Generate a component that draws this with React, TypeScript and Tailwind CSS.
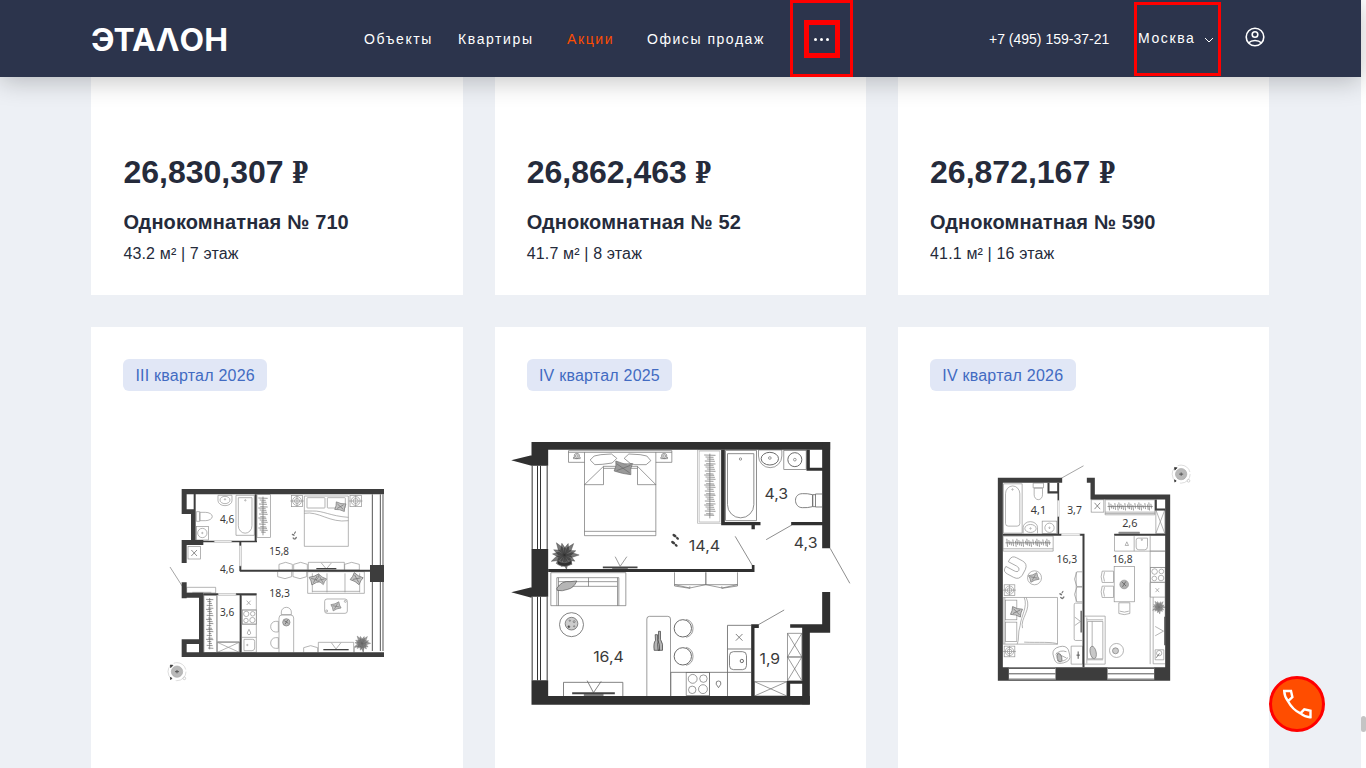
import React from "react";

const WALL = "#3d3d3d";
const WALL2 = "#303030";

type P = { x: number; y: number };

const Label = ({ x, y, w, children, size = 35, font = "Noto Sans" }: { x: number; y: number; w: number; children: string; size?: number; font?: string }) => (
  <text x={x} y={y} textLength={w} lengthAdjust="spacingAndGlyphs" fontSize={size} fontFamily={`"${font}", sans-serif`} fill="#3a3a3a" stroke="none">
    {children}
  </text>
);

const Cross = ({ x, y, w, h }: P & { w: number; h: number }) => (
  <path d={`M${x} ${y}h${w}v${h}h${-w}zl${w} ${h}M${x + w} ${y}l${-w} ${h}`} />
);

const Stove = ({ x, y, s }: P & { s: number }) => (
  <g>
    <rect x={x} y={y} width={s} height={s} />
    <circle cx={x + s * 0.28} cy={y + s * 0.28} r={s * 0.19} />
    <circle cx={x + s * 0.74} cy={y + s * 0.27} r={s * 0.16} />
    <circle cx={x + s * 0.26} cy={y + s * 0.75} r={s * 0.16} />
    <circle cx={x + s * 0.72} cy={y + s * 0.72} r={s * 0.19} />
  </g>
);

const Hangers = ({ x, y, len, size, vertical = false }: P & { len: number; size: number; vertical?: boolean }) => {
  const n = Math.floor(len / 6);
  const items = Array.from({ length: n }, (_, i) => {
    const a = ((i * 7) % 5) * 2;
    const b = ((i * 3) % 4) * 2;
    const t = i * 6 + (i % 5 === 4 ? 2 : 0);
    return vertical ? `M${x - size / 2 + a} ${y + t}L${x + size / 2 - b} ${y + t + 1}` : `M${x + t} ${y - size / 2 + a}L${x + t + 2} ${y + size / 2 - b}`;
  }).join("");
  return (
    <g stroke="#666" strokeWidth="2">
      <path d={vertical ? `M${x} ${y - 4}v${len + 4}` : `M${x - 4} ${y}h${len + 4}`} />
      <path d={items} />
    </g>
  );
};

const Plant = ({ x, y, r, color = "#555" }: P & { r: number; color?: string }) => (
  <g stroke={color} fill={color}>
    {Array.from({ length: 14 }, (_, i) => {
      const a = (i * 360) / 14 + (i % 2) * 5;
      const l = i % 3 === 0 ? r : r * 0.82;
      return <path key={i} strokeWidth="1" fillOpacity=".65" transform={`rotate(${a} ${x} ${y})`} d={`M${x} ${y}l${l * 0.5} ${-r * 0.17}l${l * 0.5} ${r * 0.17}l${-l * 0.5} ${r * 0.17}z`} />;
    })}
  </g>
);

const Lamp = ({ x, y, w = 34 }: P & { w?: number }) => (
  <g>
    <rect x={x - w / 2} y={y - w / 2} width={w} height={w} />
    <circle cx={x} cy={y} r={w * 0.39} />
    <circle cx={x} cy={y} r={w * 0.22} />
    <path d={`M${x - w * 0.6} ${y}h${w * 1.2}M${x} ${y - w * 0.5}v${w}`} />
  </g>
);

const Compass = ({ x, y }: P) => (
  <g>
    <circle cx={x} cy={y} r="27" stroke="#ccc" strokeDasharray="46 12" />
    <circle cx={x} cy={y} r="17" fill="#b9b9b9" stroke="#aaa" />
    <path d={`M${x - 6} ${y}h12M${x} ${y - 5}v10`} stroke="#555" strokeWidth="3" />
    <path d={`M${x - 20} ${y - 20}l8 1-7 7zM${x - 20} ${y + 17}l5 3-4 4z`} fill="#333" stroke="#333" />
    <circle cx={x + 22} cy={y + 20} r="4" fill="#fff" stroke="#bbb" />
  </g>
);

const Feet = ({ x, y }: P) => (
  <g fill="#777" stroke="none" transform={`translate(${x} ${y})`}>
    <ellipse cx="-1" cy="-1" rx="2.4" ry="5" transform="rotate(-60)" />
    <ellipse cx="4" cy="-6" rx="1.8" ry="4.5" transform="rotate(35 4 -6)" />
    <ellipse cx="0" cy="11" rx="2.2" ry="4" transform="rotate(-50 0 11)" />
    <ellipse cx="6" cy="11" rx="2.2" ry="5.5" transform="rotate(40 6 11)" />
  </g>
);

const Cushion = ({ x, y, r, s = 1 }: P & { r: number; s?: number }) => (
  <path transform={`translate(${x} ${y}) rotate(${r}) scale(${s})`} d="M-14-11Q0-7 14-11Q11 0 14 11Q0 7-14 11Q-11 0-14-11zM-10-6l20 12M-8 7L8-7" fill="#c4c4c4" stroke="#777" />
);

const PlanOne = () => (
  <g transform="translate(160 480) scale(.33333)" fill="none" stroke="#8f8f8f" strokeWidth="2">
    {/* furniture */}
    <path d="M174 46h42v16a21 15 0 0 1-42 0z" /><ellipse cx="195" cy="60" rx="15" ry="11" /><circle cx="195" cy="58" r="2" />
    <path d="M228 46h55v120h-55zM235 53h41v84a20 22 0 0 1-41 0z" /><circle cx="256" cy="61" r="2" />
    <path d="M109 95h10v29h-10zM120 97h16a20 12 0 0 1 0 25h-16z" />
    <rect x="110" y="139" width="35" height="41" /><circle cx="127" cy="159" r="14" /><circle cx="127" cy="159" r="2" />
    <rect x="291" y="44" width="40" height="129" /><Hangers x={309} y={54} len={112} size={28} vertical />
    <path d="M433 48h132v151h-132zM433 93h25C490 92 510 108 565 112M433 100C475 92 510 130 565 122" />
    <rect x="441" y="53" width="54" height="31" rx="2" /><rect x="502" y="53" width="54" height="31" rx="2" /><Cushion x={541} y={80} r={12} s={1.05} />
    <Lamp x={411} y={63} /><Lamp x={587} y={63} />
    <Feet x={401} y={164} />
    <rect x="84" y="200" width="38" height="37" /><path d="M94 210l17 18m0-18l-17 18" stroke="#555" />
    <path d="M80 322h87v17H80zM97 337h57" />
    <path d="M357 253l20-6 20 6v17h-40zM401 253l21-6 20 6v17h-41zM554 253l21-6 23 6v17h-44zM445 247h108v23H445z" />
    <path d="M353 275v15l22 6 20-6v-15M399 275v15l21 6 20-6v-15M484 249l15 18 15-18" /><path d="M469 266h60" stroke="#444" strokeWidth="4" />
    <path d="M443 275h170v65H443zM457 280v57M599 280v57M501 280v57M555 280v57M457 334h142" />
    <Cushion x={466} y={298} r={-20} s={1.1} /><Cushion x={484} y={299} r={30} s={0.9} /><Cushion x={590} y={296} r={30} s={1.1} />
    <rect x="494" y="357" width="68" height="43" rx="7" /><Cushion x={528} y={379} r={-20} s={0.9} />
    <circle cx="500" cy="393" r="3" /><circle cx="556" cy="364" r="3" />
    <rect x="132" y="347" width="38" height="170" /><Hangers x={149} y={358} len={150} size={22} vertical />
    <path d="M172 347v139h66M172 486h66v31h-66z" /><Cross x={172} y={487} w={66} h={30} />
    <path d="M246 346h43v171h-43M246 390h43M246 433h43M246 472h43M260 362l12 13m0-13l-12 13" /><Stove x={247} y={390} s={42} />
    <path d="M267 448l4 8a5 5 0 1 1-8 0z" /><path d="M252 478h26a6 6 0 0 1 6 6v20a8 8 0 0 1-8 8h-24z" /><circle cx="262" cy="495" r="2" />
    <path d="M357 517V414q0-9 9-9h26q9 0 9 9v103M364 404v-8a15 14 0 0 1 30 0v8zM355 424h-8a15 16 0 0 0 0 32h8zM355 473h-8a15 16 0 0 0 0 32h8z" />
    <circle cx="379" cy="427" r="11" fill="#bbb" stroke="#777" /><path d="M373 422l12 8m-10 3l8-13" stroke="#555" />
    <path d="M431 517v-14l21-6 21 6v14M475 517v-30h106v30M583 517v-14l15-5 12 5v14M514 488l14 19 15-19" /><path d="M490 509h76" stroke="#444" strokeWidth="4" />
    <Plant x={606} y={490} r={26} color="#666" />
    <path d="M30 261l39 61" stroke="#777" />
    {/* windows */}
    <path d="M637 43v470M661 43v470M669 43v470" stroke="#555" strokeWidth="3" />
    {/* walls */}
    <g fill={WALL} stroke="none">
      <path d="M65 27h607v16H65zM65 27h15v75H65zM65 88h42v14H65zM93 88h14v105H93zM65 180h65v15H65zM65 180h15v69H65zM101 43h6v50h-6z" />
      <path d="M630 255h42v51h-42zM65 517h607v14H65zM65 307h15v48H65zM65 338h65v15H65zM117 342h14v176h-14zM65 478h66v14H65zM65 478h15v53H65z" />
      <path d="M284 43h6v144h-6zM107 182h56v5h-56zM215 182h76v5h-76zM238 187h6v10h-6zM238 258h6v16h-6zM240 269h390v6H240zM130 340h45v6h-45zM228 340h62v6h-62zM239 346h6v172h-6z" />
    </g>
    <path d="M163 182h52v5h-52zM239 197v61h5v-61M175 341h53v5h-53z" stroke="#aaa" />
    <Label x={180} y={128} w={43}>4,6</Label><Label x={328} y={225} w={59}>15,8</Label><Label x={180} y={278} w={43}>4,6</Label>
    <Label x={328} y={350} w={62}>18,3</Label><Label x={180} y={408} w={43}>3,6</Label>
    <Compass x={51} y={575} />
  </g>
);

const PlanTwo = () => (
  <g transform="translate(505 435) scale(.33333)" fill="none" stroke="#6a6a6a" strokeWidth="2">
    <path d="M190 47h310v35h-48M190 47v35h48M190 52h310M238 52v250h214V52M238 289h214M238 149l57-55v55zM452 149l-55-55v55zM295 94h102M295 100h102" />
    <path d="M255 75l12-12 20-4 32-2 16 13-14 14-30 4-22 1zM357 70l14-13 34 2 20 4 12 14-14 12-34 0-14-4z" />
    <path d="M332 78Q356 91 382 86Q374 101 377 119Q353 117 327 108Q335 93 332 78zM334 86l40 28M334 107l42-16" fill="#999" stroke="#666" />
    {[215, 477].map((x) => <g key={x}><circle cx={x} cy="63" r="8" /><circle cx={x} cy="63" r="4" /><path d={`M${x - 10} 66v5h20v-5`} /></g>)}
    <Plant x={178} y={360} r={44} color="#303030" />
    <path d="M157 376q20 14 42 0v12q-22 12-42 0z" fill="#303030" />
    <path d="M330 365l15 29 20-29" /><path d="M293 397h104" stroke="#444" strokeWidth="5" /><path d="M321 402h47" stroke="#444" strokeWidth="4" />
    <g fill="#3f3f3f" stroke="none">
      {[[508, 302], [504, 323]].map(([x, y]) => (
        <g key={y}><ellipse cx={x} cy={y} rx="4" ry="7" transform={`rotate(-55 ${x} ${y})`} /><ellipse cx={x + 9} cy={y + 8} rx="3.5" ry="5" transform={`rotate(-50 ${x + 9} ${y + 8})`} /></g>
      ))}
    </g>
    {/* wardrobe */}
    <path d="M577 45h72v220h-72zM582 48h62v213h-62z" stroke="#aaa" /><Hangers x={614} y={60} len={190} size={34} vertical />
    {/* bathroom */}
    <path d="M661 46h93v211h-93zM667 56h79v153a39 39 0 0 1-79 0z" stroke="#777" strokeWidth="2.5" /><circle cx="706" cy="72" r="3.5" />
    <path d="M760 45h70v18a35 35 0 0 1-70 0z" /><ellipse cx="794" cy="71" rx="26" ry="19" strokeWidth="3" /><circle cx="794" cy="69" r="4" />
    <rect x="836" y="46" width="67" height="57" /><circle cx="869" cy="74" r="21" strokeWidth="3" /><circle cx="869" cy="74" r="4" />
    <path d="M951 177h-20v39h20M931 179h-8v36h8M922 179q-16-4-30-3c-14 0-21 9-21 20s7 22 21 22q14 1 30-3z" strokeWidth="2.5" />
    {/* living room */}
    <path d="M137 413h225v99H137zM155 512v-84h186v84M160 440h176M160 454h176M250 428v26M160 428v84M337 428v84" />
    <path d="M155 460Q170 436 195 440L215 438Q206 459 188 463Q170 470 156 466z" fill="#b5b5b5" stroke="#555" />
    <circle cx="199" cy="569" r="36" strokeWidth="2.5" /><circle cx="199" cy="566" r="19" fill="#ccc" stroke="#555" /><circle cx="191" cy="575" r="3" fill="#444" /><circle cx="207" cy="560" r="3" /><circle cx="194" cy="557" r="2" /><circle cx="207" cy="574" r="2" />
    <path d="M175 783v-41h178v41M246 737l19 36 23-34" strokeWidth="2.5" /><path d="M201 775h128" stroke="#444" strokeWidth="6" /><path d="M236 780h59" stroke="#444" strokeWidth="4" />
    <path d="M425 783V552q0-8 8-8h55q8 0 8 8v231" />
    <path d="M450 599h7v17q7 8 6 30h-16q-3-22 4-30zM460 589h6v24q9 13 6 33h-13q-4-20 1-33z" fill="#b5b5b5" stroke="#333" />
    {[580, 664].map((y) => <g key={y}><circle cx="533" cy={y} r="26" strokeWidth="3" /><path d={`M543 ${y - 27}a28 28 0 0 1 0 54`} /></g>)}
    <path d="M508 412v37h94v-37M602 412v37h95v-37M508 449l46 10 48-10 49 10 46-10M508 449l0 4 46 7v-6m96 0v6l47-7v-4" />
    {/* kitchen */}
    <path d="M667 571h71M667 571v212M667 642h71M543 712h195M497 712h46M497 712v71M613 712v71M692 597l20 20m0-20l-20 20" strokeWidth="2.5" />
    <Stove x={543} y={712} s={70} /><rect x="673" y="650" width="51" height="54" rx="12" strokeWidth="2.5" /><circle cx="710" cy="678" r="5" strokeWidth="3" /><path d="M640 758q-11-12-6-18q6-4 12 0q5 6-6 18z" strokeWidth="2.5" />
    <Cross x={847} y={595} w={43} h={71} /><Cross x={847} y={666} w={43} h={71} /><Cross x={748} y={740} w={97} h={43} />
    {/* doors and windows */}
    <path d="M783 314l77-44M690 304l52 88M975 340l59 105M760 569l77-44" stroke="#555" />
    <path d="M81 92v250M97 92v250M106 92v250M126 92v250M81 485v251M97 485v251M106 485v251M126 485v251" stroke="#333" strokeWidth="3" />
    <g fill={WALL2} stroke="none">
      <path d="M79 21h896v23H79zM79 21h50v71H79zM79 342h50v143H79zM79 736h50v73H79zM79 783h835v26H79zM18 76l61-15v31zM18 472l61-15v31z" />
      <path d="M129 402h618v9H129zM740 390h8v21h-8zM648 44h11v227h-11zM648 261h118v10H648zM739 270h10v13h-10zM858 261h93v10h-93zM951 21h24v319h-24zM904 44h10v61h-10zM904 98h47v9h-47z" />
      <path d="M951 471h24v122h-24zM855 568h120v10H855zM892 568h83v25h-83zM891 568h23v240h-23zM738 568h10v217h-10zM738 568h23v11h-23zM845 738h46v8h-46zM845 738h10v46h-10z" />
    </g>
    <Label x={551} y={348} w={94} size={44} font="Inter">14,4</Label><Label x={778} y={191} w={71} size={44} font="Inter">4,3</Label><Label x={866} y={340} w={71} size={44} font="Inter">4,3</Label>
    <Label x={264} y={681} w={92} size={44} font="Inter">16,4</Label><Label x={763} y={687} w={62} size={44} font="Inter">1,9</Label>
  </g>
);

const PlanThree = () => (
  <g transform="translate(985 460) scale(.33333)" fill="none" stroke="#8f8f8f" strokeWidth="2">
    <path d="M56 72h56v148H56zM62 102a21 23 0 0 1 43 0v89q0 8-8 8H70q-8 0-8-8z" /><circle cx="83" cy="89" r="2" />
    <path d="M145 70h31v14h-31zM148 85h25v20a12 14 0 0 1-25 0z" /><path d="M115 221v-18a21 17 0 0 1 43 0v18" /><ellipse cx="137" cy="206" rx="17" ry="12" /><circle cx="137" cy="206" r="2" />
    <rect x="172" y="184" width="44" height="37" /><circle cx="194" cy="204" r="14" /><circle cx="194" cy="204" r="2" />
    <path d="M230 55l66-37" stroke="#777" />
    <rect x="319" y="120" width="38" height="37" /><path d="M329 129l17 19m0-19l-17 19" stroke="#555" />
    <path d="M361 120h149v45H361zM361 157h149M361 161h149" /><Hangers x={372} y={140} len={132} size={24} />
    <Cross x={513} y={150} w={27} h={71} /><path d="M402 217h62v4h-62z" fill="#777" />
    {/* bedroom */}
    <path d="M55 229h150v45H55zM55 267h150" /><Hangers x={66} y={249} len={132} size={24} />
    <g transform="rotate(28 92 325)"><path d="M64 312q0-16 16-16h20q18 0 20 18v20q-2 18-20 18H80q-16 0-16-12v-6h28q12 0 12-8t-12-8H64z" /></g>
    <circle cx="149" cy="354" r="21" /><Cushion x={147} y={353} r={-20} s={0.95} />
    <Lamp x={74} y={391} w={32} /><Lamp x={74} y={575} w={32} />
    <path d="M55 413h163v140H55zM60 413v140M118 413C130 440 108 470 106 497C98 520 104 540 97 553M124 413C142 450 105 475 113 505M218 553c-10-8-60-4-100-6" />
    <rect x="62" y="421" width="34" height="59" /><rect x="62" y="487" width="34" height="58" /><Cushion x={95} y={456} r={15} s={1.1} />
    <Feet x={229} y={403} />
    <path d="M292 336h-16l-7 22 7 22h16M292 382h-16l-7 22 7 22h16M274 337v89M292 430h-20q-4 0-4 5v102q0 5 4 5h20M270 472l17 13-17 12" /><path d="M289 453v65" stroke="#555" strokeWidth="4" />
    <path d="M259 559h34v54h-34z" /><path d="M280 575v22m-5-11h10" stroke="#555" strokeWidth="3" />
    <g transform="rotate(-15 230 586)"><path d="M206 576q3-16 24-16t24 16v16q0 18-24 18t-24-18zM213 580q17-12 34 0M213 598q17 12 34 0M216 576l26 22" /><ellipse cx="222" cy="592" rx="7" ry="13" fill="#bbb" stroke="#666" /></g>
    {/* kitchen */}
    <path d="M389 229v45h152M448 229v45M496 229v384M496 323h45M426 246l5 11h-10z" /><path d="M460 235h28v25q0 10-8 10h-18q-8 0-8-8v-21q0-6 6-6z" /><circle cx="471" cy="240" r="2" />
    <path d="M496 274h45" /><Stove x={497} y={323} s={44} /><path d="M496 368h45v44h-45zM512 385l11 12m0-12l-11 12" />
    <path d="M505 412v200h36M541 412v60M511 500l25 14-25 14M511 570h26v30h-26z" /><circle cx="523" cy="580" r="8" /><path d="M514 594l10-13" stroke="#444" />
    <path d="M540 471v85" stroke="#555" strokeWidth="4" /><Plant x={522} y={442} r={21} color="#777" />
    <rect x="388" y="320" width="61" height="106" /><circle cx="418" cy="374" r="13" fill="#b0b0b0" /><path d="M411 366l13 13m-11 2l10-16" stroke="#555" />
    <path d="M386 334h-34q-6 17 0 34h34zM359 337q-6 14 0 28M386 379h-34q-6 17 0 34h34zM359 382q-6 14 0 28M402 429v32q16 7 33 0v-32zM405 454q14 6 27 0" />
    <path d="M299 469h62v144h-62M306 480h49M306 600h49M308 485h46v112h-46zM322 485v112M306 473v138" /><ellipse cx="325" cy="578" rx="9" ry="19" transform="rotate(-12 325 578)" fill="#c8c8c8" stroke="#777" />
    <circle cx="395" cy="572" r="21" /><circle cx="392" cy="573" r="9" fill="#ccc" stroke="#777" />
    <g fill={WALL} stroke="none">
      <path d="M39 54h193v15H39zM39 54h15v609H39zM39 622h517v41H39zM541 104h15v559h-15zM317 104h239v15H317zM306 54h24v15h-24zM317 54h13v65h-13z" />
      <path d="M218 69h5v53h-5zM218 170h5v57h-5zM54 222h176v6H54zM285 222h14v6h-14zM293 222h6v400h-6zM388 222h155v6H388zM188 69h6v31h-6zM188 94h32v7h-32zM217 69h6v32h-6zM510 119h6v33h-6zM510 146h31v6h-31z" />
    </g>
    {[72, 368].map((x) => <g key={x}><rect x={x} y="624" width="140" height="36" fill="#fff" stroke="none" /><path d={`M${x} 626h140M${x} 642h140M${x} 658h140`} stroke="#555" strokeWidth="3" /></g>)}
    <path d="M218 122h5v48h-5zM230 222h55v5h-55z" stroke="#bbb" />
    <Label x={138} y={162} w={46}>4,1</Label><Label x={247} y={162} w={44}>3,7</Label><Label x={412} y={203} w={46}>2,6</Label><Label x={215} y={309} w={62}>16,3</Label><Label x={382} y={309} w={61}>16,8</Label>
    <Compass x={589} y={43} />
  </g>
);

const offers = [
  { price: "26,830,307", title: "Однокомнатная № 710", info: "43.2 м² | 7 этаж" },
  { price: "26,862,463", title: "Однокомнатная № 52", info: "41.7 м² | 8 этаж" },
  { price: "26,872,167", title: "Однокомнатная № 590", info: "41.1 м² | 16 этаж" },
];

const plans = [
  { date: "III квартал 2026", w: "w-[143.5px]", box: "91 391 371.33 376.5", plan: <PlanOne />, label: "Планировка 1" },
  { date: "IV квартал 2025", w: "w-[145.5px]", box: "494.83 391 371.33 376.5", plan: <PlanTwo />, label: "Планировка 2" },
  { date: "IV квартал 2026", w: "w-[145.5px]", box: "898.17 391.2 371.33 376.5", plan: <PlanThree />, label: "Планировка 3" },
];

function Header() {
  return (
    <header className="relative z-10 flex h-[77px] w-[1361px] shrink-0 items-center bg-[#2c344c] pl-[91px] text-[14px] text-white shadow-[0_4px_24px_rgba(0,0,0,0.24)]">
      <svg className="block h-[40px] w-[140px] shrink-0" viewBox="0 0 140 40" role="img" aria-label="ЭТАЛОН">
        <text x="0" y="31.5" textLength="137" lengthAdjust="spacingAndGlyphs" fontFamily="Inter, sans-serif" fontWeight="700" fontSize="31" fill="#fff">ЭТАΛОН</text>
      </svg>
      <nav className="mt-[2px] ml-[133px] flex shrink-0 items-center whitespace-nowrap tracking-[1.6px]">
        <a className="w-[94px]">Объекты</a>
        <a className="w-[109px]">Квартиры</a>
        <a className="w-[80px] text-[#ff4d00]">Акции</a>
        <a className="w-[143px] tracking-[1.54px]">Офисы продаж</a>
      </nav>
      <div className="flex h-[77px] w-[63px] shrink-0 items-center justify-center border-[3px] border-[#ff0000]">
        <button className="flex h-[38px] w-[36px] items-center justify-center gap-[3px] border-[5px] border-[#ff0000]" aria-label="Ещё">
          <i className="mt-px size-[3px] rounded-full bg-white" />
          <i className="mt-px size-[3px] rounded-full bg-white" />
          <i className="mt-px size-[3px] rounded-full bg-white" />
        </button>
      </div>
      <span className="mt-[2px] ml-[136px] w-[144.5px] shrink-0 whitespace-nowrap">+7 (495) 159-37-21</span>
      <button className="flex h-[74px] w-[87px] shrink-0 items-center border-[3px] border-[#ff0000] pl-[1.5px] tracking-[1.6px]">
        <span className="w-[66px] text-left">Москва</span>
        <svg className="mt-[2px] h-[6px] w-[10px]" viewBox="0 0 10 6" fill="none" stroke="#fff"><path d="M1 1l4 4 4-4" /></svg>
      </button>
      <svg className="mb-[3px] ml-[24px] size-[20px] shrink-0" viewBox="0 0 20 20" fill="none" stroke="#fff" strokeWidth="1.6">
        <circle cx="10" cy="10" r="8.8" /><circle cx="10" cy="7.5" r="2.8" /><path d="M3.8 15.8C6.5 12.8 13.5 12.8 16.2 15.8" />
      </svg>
    </header>
  );
}

export default function App() {
  return (
    <div className="relative flex h-[768px] w-[1366px] overflow-hidden bg-white font-['Liberation_Sans',sans-serif] text-[#252b3b]">
      <div className="flex w-[1361px] flex-col bg-[#edf0f5]">
        <Header />
        <main className="ml-[91.4px] grid w-[1178px] grid-cols-3 gap-8">
          {offers.map((o) => (
            <article key={o.title} className="flex h-[218px] flex-col bg-white px-8 pt-[75px]">
              <p className="flex items-baseline gap-[8.5px] text-[32px] leading-[40px] font-bold">
                {o.price}
                <span className="inline-block w-[17px] origin-left scale-x-[.8] font-['DejaVu_Serif',serif] text-[29px] leading-none">₽</span>
              </p>
              <h3 className="mt-[16px] text-[20px] leading-[28px] font-bold tracking-[0.12px] whitespace-nowrap">{o.title}</h3>
              <p className="mt-[6px] text-[16px] leading-[24px] tracking-[0.15px]">{o.info}</p>
            </article>
          ))}
          {plans.map((p) => (
            <article key={p.label} className="flex h-[441px] flex-col bg-white pt-8">
              <span className={`${p.w} ml-8 h-8 shrink-0 rounded-md bg-[#e1e7f6] text-center text-[16px] leading-[33px] tracking-[0.22px] whitespace-nowrap text-[#426bc2]`}>{p.date}</span>
              <svg className="block h-[376.5px] w-full shrink-0" viewBox={p.box} aria-label={p.label}>{p.plan}</svg>
            </article>
          ))}
        </main>
      </div>
      <button className="absolute top-[676px] left-[1269px] flex size-[56px] items-center justify-center rounded-full border-[3px] border-[#ff0000] bg-[#ff4d00]" aria-label="Позвонить">
        <svg className="size-[30px]" viewBox="0 0 30 30" fill="none" stroke="#fff" strokeWidth="2.4">
          <path d="M2.2 2H9L10.4 8.2 6 12.2Q2.4 7.5 2.2 2zM6 12.2Q10.5 20.5 18.4 24.4M18.4 24.4L22.3 20.3 28.5 21.8V28.2Q23.5 28.5 18.4 24.4z" />
        </svg>
      </button>
      <div className="absolute top-[716px] left-[1361px] h-4 w-[5px] rounded-[2.5px] bg-[#c4c4c4]" />
    </div>
  );
}
